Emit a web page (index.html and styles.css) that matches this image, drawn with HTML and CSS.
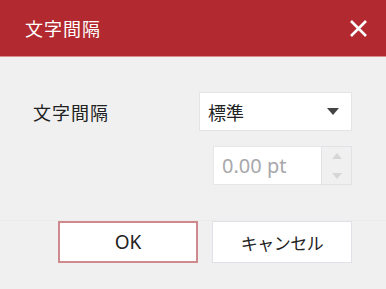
FILE: index.html
```html
<!DOCTYPE html>
<html lang="ja">
<head>
<meta charset="utf-8">
<link rel="stylesheet" href="styles.css">
</head>
<body>
<div class="dialog">
  <div class="header">
    <span class="title">文字間隔</span>
    <svg class="close" width="19" height="19" viewBox="0 0 19 19"><path d="M2 2 L17 17 M17 2 L2 17" stroke="#fff" stroke-width="2.6" fill="none"/></svg>
  </div>
  <div class="content">
    <div class="row">
      <span class="label">文字間隔</span>
      <div class="select">
        <span class="select-text">標準</span>
        <svg class="caret" width="12" height="7" viewBox="0 0 12 7"><path d="M0 0 H12 L6 7 Z" fill="#444"/></svg>
      </div>
    </div>
    <div class="row row2">
      <div class="number">
        <span class="num-text">0.00 pt</span>
      </div>
      <div class="spinner">
        <svg width="10" height="6" viewBox="0 0 10 6"><path d="M0 6 L5 0 L10 6 Z" fill="#d6d6d6"/></svg>
        <svg width="10" height="6" viewBox="0 0 10 6"><path d="M0 0 L10 0 L5 6 Z" fill="#d6d6d6"/></svg>
      </div>
    </div>
  </div>
  <div class="footer">
    <button class="btn btn-ok">OK</button>
    <button class="btn btn-cancel">キャンセル</button>
  </div>
</div>
</body>
</html>
```

FILE: styles.css
```css
html, body {
  margin: 0;
  padding: 0;
  background: #f0f0f0;
  font-family: "Noto Sans", "Noto Sans CJK JP", sans-serif;
}
.dialog {
  width: 386px;
  height: 289px;
  background: #f0f0f0;
}
.header {
  height: 56px;
  background: #b22a30;
  border-bottom: 1px solid #d98a8e;
  display: flex;
  align-items: center;
  justify-content: space-between;
  padding: 0 18px 0 25px;
}
.title {
  color: #fff;
  font-size: 18px;
  font-family: "Noto Sans CJK JP", sans-serif;
  letter-spacing: 1px;
  margin-top: -1px;
}
.close {
  display: block;
}
.content {
  padding: 35px 34px 0 33px;
}
.row {
  display: flex;
  align-items: center;
  justify-content: space-between;
}
.label {
  font-size: 18px;
  color: #222;
  font-family: "Noto Sans CJK JP", sans-serif;
  letter-spacing: 1px;
}
.select {
  box-sizing: border-box;
  width: 153px;
  height: 39px;
  background: #fff;
  border: 1px solid #e3e3e8;
  display: flex;
  align-items: center;
  justify-content: space-between;
  padding: 0 12px 0 8px;
}
.select-text {
  font-size: 18px;
  color: #222;
  font-family: "Noto Sans CJK JP", sans-serif;
}
.caret {
  display: block;
}
.row2 {
  margin-top: 15px;
  justify-content: flex-end;
}
.number {
  box-sizing: border-box;
  width: 108px;
  height: 39px;
  background: #fff;
  border: 1px solid #e6e6e8;
  border-right: none;
  display: flex;
  align-items: center;
  padding-left: 8px;
}
.num-text {
  font-size: 20px;
  color: #a8a8ac;
  font-family: "Noto Sans", sans-serif;
}
.spinner {
  box-sizing: border-box;
  width: 31px;
  height: 39px;
  background: #f0f0f0;
  border: 1px solid #e2e2e6;
  display: flex;
  flex-direction: column;
  align-items: center;
  justify-content: center;
  gap: 14px;
}
.spinner svg {
  display: block;
}
.footer {
  margin-top: 35px;
  border-top: 1px solid #ebebeb;
  display: flex;
  justify-content: flex-end;
  gap: 14px;
  padding: 0 34px;
}
.btn {
  box-sizing: border-box;
  width: 140px;
  height: 42px;
  background: #fff;
  border: 1px solid #e1e1e8;
  font-size: 19px;
  color: #222;
  font-family: "Noto Sans", "Noto Sans CJK JP", sans-serif;
  padding: 0;
}
.btn-cancel {
  font-size: 17px;
  letter-spacing: -0.5px;
}
.btn-ok {
  border: 2px solid #d0898d;
}
```
